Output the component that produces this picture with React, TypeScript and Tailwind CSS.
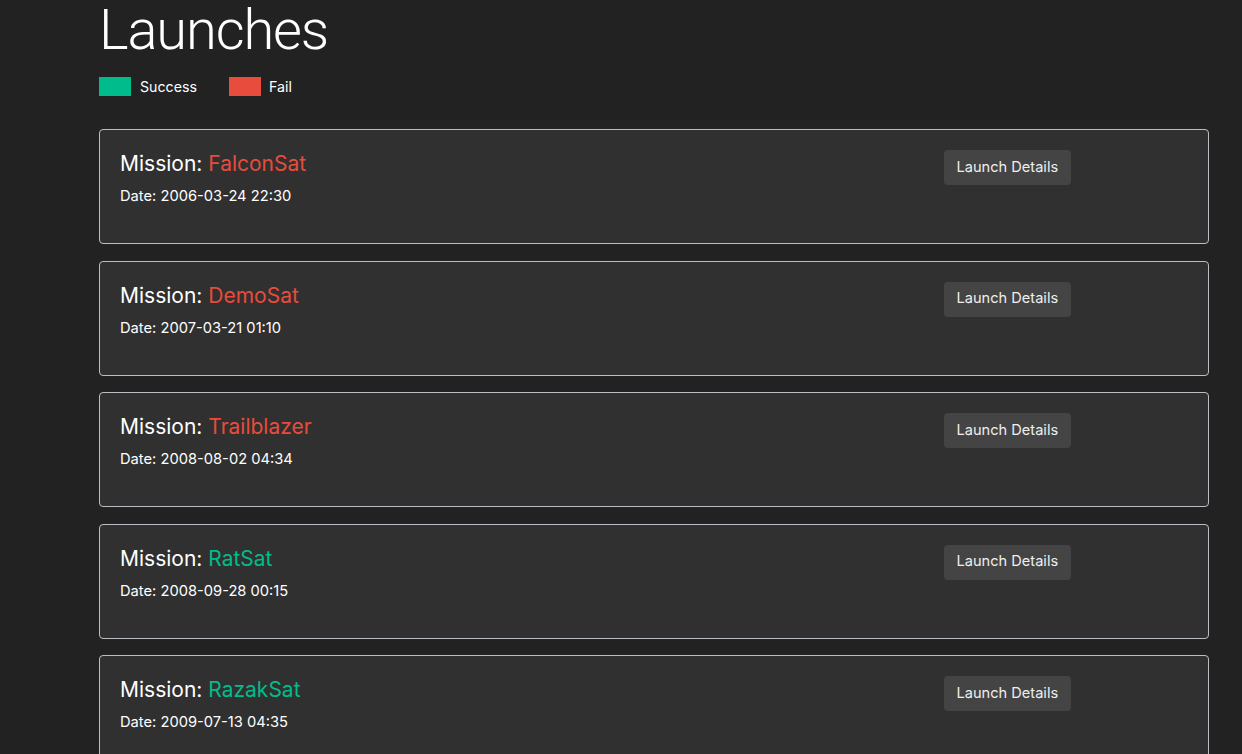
import React from 'react';

type Launch = {
    name: string;
    date: string;
    success: boolean;
};

const launches: Launch[] = [
    { name: 'FalconSat', date: '2006-03-24 22:30', success: false },
    { name: 'DemoSat', date: '2007-03-21 01:10', success: false },
    { name: 'Trailblazer', date: '2008-08-02 04:34', success: false },
    { name: 'RatSat', date: '2008-09-28 00:15', success: true },
    { name: 'RazakSat', date: '2009-07-13 04:35', success: true },
];

function LaunchItem({ launch }: { launch: Launch }) {
    return (
        <div className="h-[115px] shrink-0 rounded border border-[#b9bec4] bg-[#303030] px-5 pt-5">
            <div className="flex">
                <div className="w-[824px]">
                    <h4 className="text-[21px] leading-[24px] text-white mt-[2px]">
                        Mission:{' '}
                        <span className={launch.success ? 'text-[#00bc8c]' : 'text-[#e74c3c]'}>{launch.name}</span>
                    </h4>
                    <p className="mt-[9px] text-[14.7px] leading-[22px] text-white">Date: {launch.date}</p>
                </div>
                <div>
                    <button className="h-[35px] rounded bg-[#444] px-[12.5px] text-[14.6px] text-[#eee]">
                        Launch Details
                    </button>
                </div>
            </div>
        </div>
    );
}

export default function App() {
    return (
        <main className="min-h-screen bg-[#222] font-['Inter','Liberation_Sans',sans-serif] text-white">
            <div className="pl-[99px] w-[1209px]">
                <h1 className="pt-[2px] font-['Roboto','Liberation_Sans',sans-serif] text-[56px] leading-[56px] font-light tracking-[-0.02em]">
                    Launches
                </h1>
                <div className="mt-[18px] flex items-center text-[14.2px]">
                    <span className="h-[19px] w-[32px] bg-[#00bc8c]" />
                    <span className="ml-[9px]">Success</span>
                    <span className="ml-[32px] h-[19px] w-[32px] bg-[#e74c3c]" />
                    <span className="ml-[8px]">Fail</span>
                </div>
                <div className="mt-[32px] flex flex-col gap-[16.5px]">
                    {launches.map((l) => (
                        <LaunchItem key={l.name} launch={l} />
                    ))}
                </div>
            </div>
        </main>
    );
}
